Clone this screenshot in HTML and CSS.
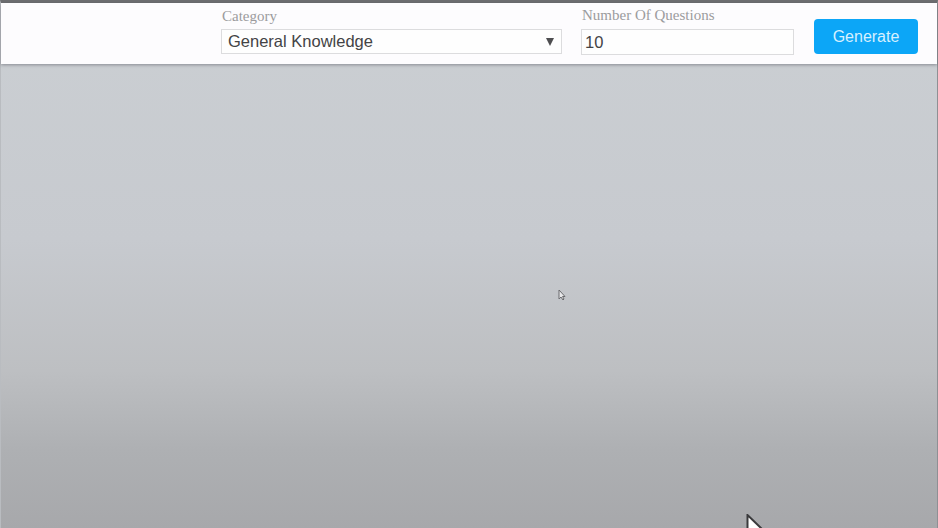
FILE: index.html
```html
<!DOCTYPE html>
<html>
<head>
<meta charset="utf-8">
<link rel="stylesheet" href="styles.css">
</head>
<body>
<div class="frame">
  <header class="toolbar">
    <div class="field field-category">
      <label class="field-label">Category</label>
      <div class="select">
        <span class="select-value">General Knowledge</span>
        <span class="select-arrow"></span>
      </div>
    </div>
    <div class="field field-number">
      <label class="field-label">Number Of Questions</label>
      <div class="input">10</div>
    </div>
    <button class="generate">Generate</button>
  </header>
  <main class="stage"></main>
  <svg class="cursor cursor-small" width="8" height="12" viewBox="0 0 8 12"><path d="M1 1 L1 10 L3 8 L5 11 L6 10 L4.5 7.5 L7 7.5 Z" fill="#e8e8ea" stroke="#6a6b6e" stroke-width="1"/></svg>
  <svg class="cursor cursor-big" width="22" height="16" viewBox="0 0 22 16"><path d="M1.5 1 L1.5 16 L17 16 Z" fill="#ffffff" stroke="#3a3a3c" stroke-width="2"/></svg>
</div>
</body>
</html>
```

FILE: styles.css
```css
* { box-sizing: border-box; }
html, body { margin: 0; padding: 0; }
body {
  width: 938px;
  height: 528px;
  overflow: hidden;
  font-family: "Liberation Sans", Arial, sans-serif;
}
.frame {
  position: relative;
  width: 938px;
  height: 528px;
  border-top: 3px solid #6d6e71;
  border-left: 1px solid #b9bcc0;
  border-right: 1px solid #8e9094;
  display: flex;
  flex-direction: column;
  background: linear-gradient(180deg, #cbcfd3 0%, #c7cacf 45%, #bdbfc2 70%, #aeb0b3 85%, #a7a8ab 100%);
}
.toolbar {
  height: 61px;
  flex: none;
  background: #fdfcfe;
  display: flex;
  align-items: flex-start;
  padding-left: 220px;
  box-shadow: 0 1px 3px rgba(60, 60, 70, 0.45);
  position: relative;
  z-index: 1;
}
.field {
  display: flex;
  flex-direction: column;
}
.field-category { width: 341px; padding-top: 5px; }
.field-number { width: 213px; margin-left: 19px; padding-top: 4px; }
.field-label {
  font-family: "Liberation Serif", "Times New Roman", serif;
  font-size: 15px;
  color: #9b9b9d;
  line-height: 17px;
  padding-left: 1px;
  margin-bottom: 4px;
}
.field-number .field-label { margin-bottom: 5px; }
.select, .input {
  height: 25px;
  border: 1px solid #dcdcde;
  background: #fefefe;
  display: flex;
  align-items: center;
  font-size: 16.5px;
  color: #434345;
  padding-left: 6px;
}
.input { height: 26px; padding-left: 3px; }
.select-value { flex: 1; }
.select-arrow {
  width: 0;
  height: 0;
  border-left: 4px solid transparent;
  border-right: 4px solid transparent;
  border-top: 8px solid #4e4e50;
  margin-right: 7px;
  margin-top: 1px;
}
.generate {
  margin-left: 20px;
  margin-top: 16px;
  width: 104px;
  height: 35px;
  border: none;
  border-radius: 4px;
  background: #0ca6f7;
  color: #d6f0ff;
  font-family: "Liberation Sans", Arial, sans-serif;
  font-size: 16px;
  padding: 0;
}
.stage { flex: 1; }
.cursor { position: absolute; }
.cursor-small { left: 557px; top: 286px; }
.cursor-big { left: 745px; top: 511px; }
```
